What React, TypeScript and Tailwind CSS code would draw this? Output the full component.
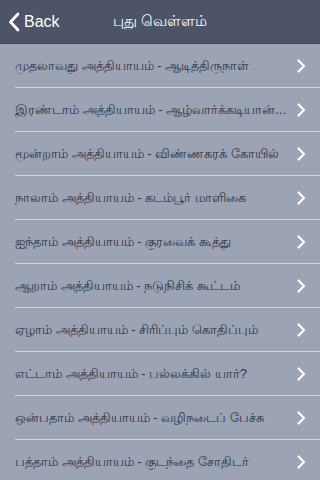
import React from "react";

const items = [
  "முதலாவது அத்தியாயம் - ஆடித்திருநாள்",
  "இரண்டாம் அத்தியாயம் - ஆழ்வார்க்கடியான்...",
  "மூன்றாம் அத்தியாயம் - விண்ணகரக் கோயில்",
  "நாலாம் அத்தியாயம் - கடம்பூர் மாளிகை",
  "ஐந்தாம் அத்தியாயம் - குரவைக் கூத்து",
  "ஆறாம் அத்தியாயம் - நடுநிசிக் கூட்டம்",
  "ஏழாம் அத்தியாயம் - சிரிப்பும் கொதிப்பும்",
  "எட்டாம் அத்தியாயம் - பல்லக்கில் யார்?",
  "ஒன்பதாம் அத்தியாயம் - வழிநடைப் பேச்சு",
  "பத்தாம் அத்தியாயம் - குடந்தை சோதிடர்",
];

function Chevron() {
  return (
    <svg width="9" height="14" viewBox="0 0 9 14" className="shrink-0">
      <path d="M1.5 1.5 L7 7 L1.5 12.5" fill="none" stroke="#ffffff" strokeWidth="2.2" strokeLinecap="round" strokeLinejoin="round" />
    </svg>
  );
}

export default function App() {
  return (
    <div
      className="w-[320px] h-[480px] overflow-hidden bg-[#9ba3b4] flex flex-col"
      style={{ fontFamily: '"Liberation Sans", "Noto Sans", sans-serif' }}
    >
      <div className="h-[44px] shrink-0 bg-[#4d5468] border-b border-[#3c4253] relative flex items-center justify-center">
        <div className="absolute left-[8px] top-0 h-full flex items-center gap-[4px] text-white">
          <svg width="12" height="20" viewBox="0 0 12 20">
            <path d="M10 2 L2.5 10 L10 18" fill="none" stroke="#ffffff" strokeWidth="2.8" strokeLinecap="round" strokeLinejoin="round" />
          </svg>
          <span className="text-[16px] leading-none">Back</span>
        </div>
        <span className="text-white text-[15px]">புது வெள்ளம்</span>
      </div>
      <div className="flex flex-col">
        {items.map((t, i) => (
          <div key={i} className="pl-[15px]">
            <div className={`h-[44px] flex items-center pr-[14px] ${i < items.length - 1 ? "border-b border-[#d0d5de]" : ""}`}>
              <span className="flex-1 truncate text-[13px] text-[#2b3240]">{t}</span>
              <Chevron />
            </div>
          </div>
        ))}
      </div>
    </div>
  );
}
